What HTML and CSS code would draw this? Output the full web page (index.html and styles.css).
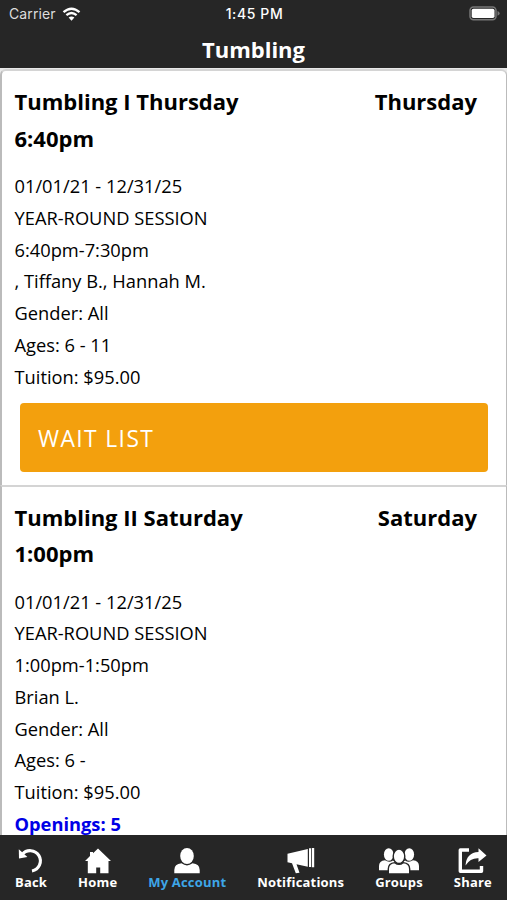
FILE: index.html
```html
<!DOCTYPE html>
<html lang="en">
<head>
<meta charset="utf-8">
<title>Tumbling</title>
<link rel="stylesheet" href="styles.css">
</head>
<body>
<div class="app">
  <header class="top">
    <div class="status">
      <div class="carrier"><span>Carrier</span>
        <svg width="19" height="14" viewBox="0 0 18 14" fill="none" stroke="#fff" stroke-width="2.3"><path d="M1 5.2Q9-1.8 17 5.2M3.9 8.2Q9 3.8 14.1 8.2"/><path d="M9 13.7L6.1 10.6Q9 8.2 11.9 10.6Z" fill="#fff" stroke="none"/></svg>
      </div>
      <div class="time">1:45 PM</div>
      <div class="power"><svg width="31" height="15" viewBox="0 0 31 15"><rect x="1" y="1" width="26" height="12.7" rx="3.5" fill="#262626" stroke="#777" stroke-width="1.5"/><rect x="2.7" y="2.7" width="22.8" height="9.3" rx="1.8" fill="#fff"/><path d="M28.5 5v4.8q2.2-1 2.2-2.4T28.5 5z" fill="#777"/></svg></div>
    </div>
    <h1 class="heading">Tumbling</h1>
  </header>
  <main class="list">
    <section class="card">
      <div class="title"><h2 class="name">Tumbling I Thursday 6:40pm</h2><div class="day">Thursday</div></div>
      <div class="details">
        <div>01/01/21 - 12/31/25</div>
        <div>YEAR-ROUND SESSION</div>
        <div>6:40pm-7:30pm</div>
        <div>, Tiffany B., Hannah M.</div>
        <div>Gender: All</div>
        <div>Ages: 6 - 11</div>
        <div>Tuition: $95.00</div>
      </div>
      <div class="wait">WAIT LIST</div>
    </section>
    <section class="card">
      <div class="title"><h2 class="name">Tumbling II Saturday 1:00pm</h2><div class="day">Saturday</div></div>
      <div class="details">
        <div>01/01/21 - 12/31/25</div>
        <div>YEAR-ROUND SESSION</div>
        <div>1:00pm-1:50pm</div>
        <div>Brian L.</div>
        <div>Gender: All</div>
        <div>Ages: 6 -</div>
        <div>Tuition: $95.00</div>
        <div class="openings">Openings: 5</div>
      </div>
    </section>
  </main>
  <nav class="tabs">
    <div class="tab back"><svg width="26" height="26" viewBox="0 0 26 26"><path d="M4.2 6.5A10.2 10.2 0 1 1 14 22.9" fill="none" stroke="#fff" stroke-width="3.1"/><path d="M.8 1.2L1 10.4L9.4 9.1Z" fill="#fff"/></svg><span>Back</span></div>
    <div class="tab home"><svg width="26" height="26" viewBox="0 0 26 26"><path d="M13 .5L26 13H23.5V25.2H15.2V19.5H11.2V25.2H2.8V13H0L5 8V4H8V5.3Z" fill="#fff"/></svg><span>Home</span></div>
    <div class="tab account"><svg width="26" height="26" viewBox="0 0 26 26" fill="#fff"><ellipse cx="13" cy="8" rx="6.8" ry="8"/><path d="M.3 25.2V22Q.3 16 7.5 15.3Q13 19.6 18.5 15.3Q25.7 16 25.7 22V25.2Z"/></svg><span>My Account</span></div>
    <div class="tab notes"><svg width="28" height="26" viewBox="0 0 28 26" fill="#fff"><path d="M.5 5.7L20.8 1V18.7L9.5 16.3L12.5 24.7L8.8 25.3L5 15.2L.5 14.2Z"/><path d="M22 .3H24V19H22ZM24.8 0H27.2V19.2H24.8Z"/></svg><span>Notifications</span></div>
    <div class="tab groups"><svg width="40" height="26" viewBox="0 0 40 26" fill="#fff"><ellipse cx="9.7" cy="6.5" rx="4.8" ry="6.3"/><ellipse cx="30.3" cy="6.5" rx="4.8" ry="6.3"/><path d="M0 22.3V18Q0 12.8 6 12.2Q10 15 14 12.4L16 14V22.3ZM40 22.3V18Q40 12.8 34 12.2Q30 15 26 12.4L24 14V22.3Z"/><g stroke="#262626" stroke-width="1.4"><ellipse cx="20" cy="8.3" rx="5.8" ry="7.2"/><path d="M9.3 26V21Q9.3 15.2 15.8 14.6Q20 18 24.2 14.6Q30.7 15.2 30.7 21V26Z"/></g></svg><span>Groups</span></div>
    <div class="tab share"><svg width="29" height="26" viewBox="0 0 29 26"><path d="M11 2H2.3V23.3H23.5V18" fill="none" stroke="#fff" stroke-width="3.4" stroke-linejoin="round"/><path d="M7.5 17.5Q8.3 4.7 20.5 4V.2L28.5 7.4L20.5 14V10.3Q12.5 9.8 7.5 17.5Z" fill="#fff"/></svg><span>Share</span></div>
  </nav>
</div>
</body>
</html>
```

FILE: styles.css
```css
* { box-sizing: border-box; }
body { margin: 0; background: #fff; color: #000; font-family: "Open Sans", sans-serif; }
.app { height: 900px; display: flex; flex-direction: column; overflow: hidden; }
.top { height: 68px; flex: none; background: #262626; color: #fff; }
.status { height: 27px; padding: 0 7px 0 9px; display: grid; grid-template-columns: 1fr auto 1fr; align-items: center; font-family: Inter, sans-serif; font-size: 14px; }
.carrier { display: flex; align-items: center; gap: 6px; color: #ddd; letter-spacing: 0.1px; }
.time { font-weight: 500; font-size: 14px; letter-spacing: 0.6px; }
.power { display: flex; justify-content: flex-end; }
.heading { margin: 0; height: 41px; line-height: 45px; text-align: center; font-size: 22px; font-weight: 700; }
.list { flex: 1; min-height: 0; overflow: hidden; background: #e8e8e8; padding-top: 1px; }
.card { height: 415.5px; border: 1px solid #bbb; border-width: 2px 1px 0 2px; background: #fff; padding: 12px 29px 0 12.5px; }
.card:first-child { border-radius: 6px 6px 0 0; border-top-color: #d4d4d4; }
.card + .card { border-top-color: #d4d4d4; }
.title { display: flex; justify-content: space-between; font-size: 22px; line-height: 36.5px; font-weight: 700; }
.name { margin: 0; width: 240px; font-size: inherit; font-weight: inherit; }
.details { margin-top: 14px; font-size: 18.3px; line-height: 31.75px; }
.openings { color: #0000e6; font-weight: 700; }
.wait { height: 69px; margin: 11px -11px 0 5.5px; padding-left: 18px; border-radius: 4px; background: #f3a00d; color: #fff; font-size: 22.8px; line-height: 71px; letter-spacing: 1.4px; }
.tabs { height: 65px; flex: none; background: #262626; color: #fff; display: flex; justify-content: space-between; padding: 13px 15px 0 15px; font-size: 13px; font-weight: 700; line-height: 17px; letter-spacing: 0.2px; }
.tab { display: flex; flex-direction: column; align-items: center; }
.tab svg { display: block; }
.account { color: #3ea6e8; }
```
